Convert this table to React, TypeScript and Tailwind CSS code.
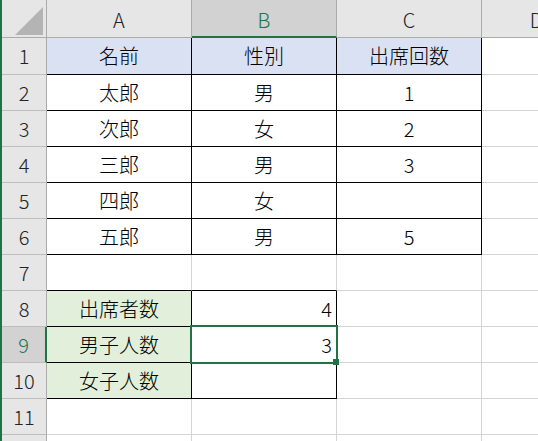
import React from "react";

type Cell = { text?: string; align?: "center" | "right"; fill?: "blue" | "green" };

const COLS = ["A", "B", "C", "D"];
const ROW_COUNT = 12;

// sheet contents, keyed by row number
const DATA: Record<number, Cell[]> = {
  1: [
    { text: "名前", fill: "blue" },
    { text: "性別", fill: "blue" },
    { text: "出席回数", fill: "blue" },
  ],
  2: [{ text: "太郎" }, { text: "男" }, { text: "1" }],
  3: [{ text: "次郎" }, { text: "女" }, { text: "2" }],
  4: [{ text: "三郎" }, { text: "男" }, { text: "3" }],
  5: [{ text: "四郎" }, { text: "女" }, {}],
  6: [{ text: "五郎" }, { text: "男" }, { text: "5" }],
  8: [{ text: "出席者数", fill: "green" }, { text: "4", align: "right" }],
  9: [{ text: "男子人数", fill: "green" }, { text: "3", align: "right" }],
  10: [{ text: "女子人数", fill: "green" }, {}],
};

const SELECTED_ROW = 9;
const SELECTED_COL = 1;

function inBox(r: number, c: number) {
  return (r >= 1 && r <= 6 && c <= 2) || (r >= 8 && r <= 10 && c <= 1);
}

function SheetCell({ r, c }: { r: number; c: number }) {
  const cell = DATA[r]?.[c] ?? {};
  const rightBlack = inBox(r, c) || inBox(r, c + 1);
  const bottomBlack = inBox(r, c) || inBox(r + 1, c);
  return (
    <div
      className={`flex items-center overflow-hidden whitespace-nowrap border-r border-b text-black ${
        rightBlack ? "border-r-black" : "border-r-[#d4d4d4]"
      } ${bottomBlack ? "border-b-black" : "border-b-[#d4d4d4]"} ${
        cell.fill === "blue" ? "bg-[#d9e1f2]" : cell.fill === "green" ? "bg-[#e2efda]" : "bg-white"
      } ${cell.align === "right" ? "justify-end pr-[4px]" : "justify-center"}`}
    >
      {cell.text}
    </div>
  );
}

export default function App() {
  const rows = Array.from({ length: ROW_COUNT }, (_, i) => i + 1);

  return (
    <div className="h-[441px] w-[538px] overflow-hidden border-l-2 border-l-[#217346] bg-white font-['Noto_Sans_CJK_JP',sans-serif] text-[20px] font-light leading-none">
      <div className="relative grid grid-cols-[45px_145px_145px_145px_110px] grid-rows-[38px_37px_repeat(11,36px)]">
        {/* corner */}
        <div className="relative border-r border-b border-[#ababab] bg-[#e6e6e6]">
          <svg className="absolute left-0 top-0" width="44" height="37" viewBox="0 0 44 37">
            <polygon points="41,7 41,35 13,35" fill="#b4b4b4" />
          </svg>
        </div>

        {COLS.map((col, c) => (
          <div
            key={col}
            className={`flex items-center justify-center border-r border-r-[#ababab] pt-[3px] ${
              c === SELECTED_COL
                ? "border-b-2 border-b-[#217346] bg-[#d2d2d2] text-[#217346]"
                : "border-b border-b-[#ababab] bg-[#e6e6e6] text-[#222]"
            }`}
          >
            {col}
          </div>
        ))}

        {rows.map((r) => (
          <React.Fragment key={r}>
            <div
              className={`flex items-center justify-center border-b border-b-[#bdbdbd] ${
                r === SELECTED_ROW
                  ? "border-r-2 border-r-[#217346] bg-[#d2d2d2] text-[#217346]"
                  : "border-r border-r-[#ababab] bg-[#e6e6e6] text-[#222]"
              }`}
            >
              {r}
            </div>
            {COLS.map((col, c) => (
              <SheetCell key={col} r={r} c={c} />
            ))}
          </React.Fragment>
        ))}

        {/* active cell B9 */}
        <div className="pointer-events-none absolute left-[188px] top-[325px] h-[39px] w-[148px] border-2 border-[#217346]" />
        <div className="pointer-events-none absolute left-[331px] top-[359px] h-[6px] w-[6px] bg-[#217346]" />
      </div>
    </div>
  );
}
